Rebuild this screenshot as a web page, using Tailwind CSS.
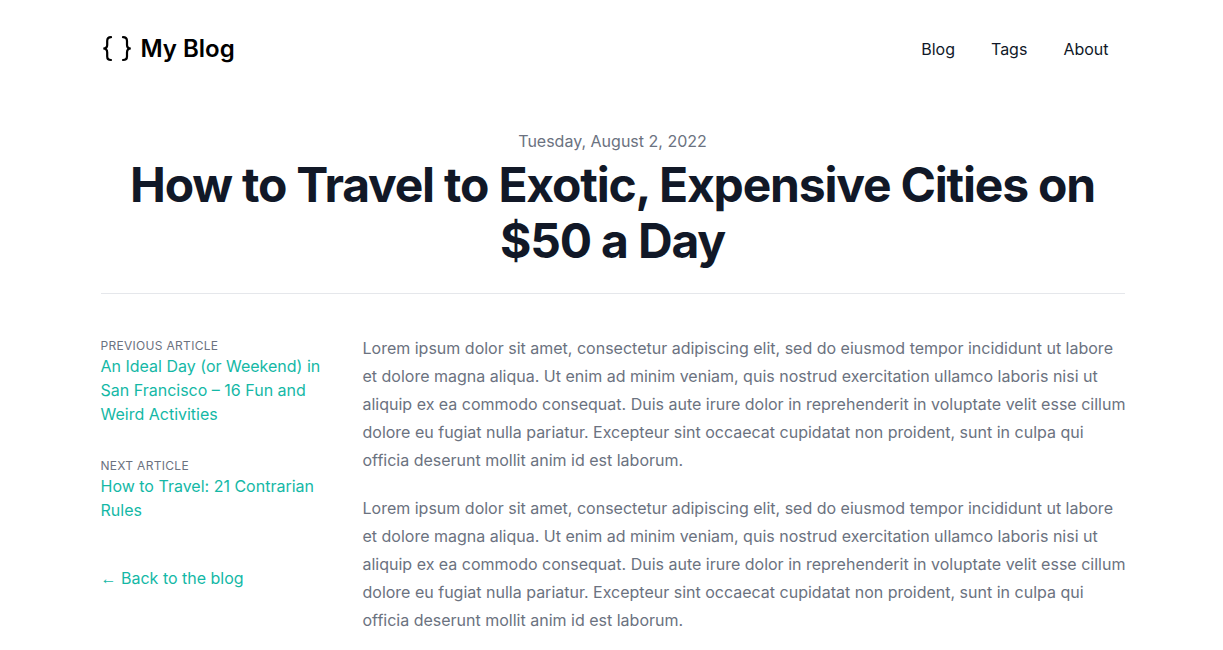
<!DOCTYPE html>
<html lang="en">
<head>
<meta charset="utf-8">
<meta name="viewport" content="width=device-width, initial-scale=1">
<title>My Blog</title>
<script src="https://cdn.jsdelivr.net/npm/@tailwindcss/browser@4"></script>
</head>
<body class="bg-white pl-0.5 font-['Inter','Liberation_Sans',sans-serif] text-black">
<div class="mx-auto max-w-5xl">
  <header class="flex items-center justify-between pt-[33px] pb-8">
    <a href="#" class="flex items-center gap-2">
      <svg class="h-8 w-8" viewBox="0 0 32 32" fill="none" stroke="currentColor" stroke-width="2.2" stroke-linecap="round" aria-hidden="true"><path d="M10 4.200Q6.200 4.200 6.200 8V12Q6.200 15.500 2.300 15.500Q6.200 15.500 6.200 19.500V23.500Q6.200 27 10 27M22 4.200Q26 4.200 26 8V12Q26 15.500 29.800 15.500Q26 15.500 26 19.500V23.500Q26 27 22 27"/></svg>
      <span class="text-2xl font-semibold">My Blog</span>
    </a>
    <nav class="flex gap-1 text-base text-gray-900">
      <a href="#" class="px-4">Blog</a>
      <a href="#" class="px-4">Tags</a>
      <a href="#" class="px-4">About</a>
    </nav>
  </header>
  <main>
    <article>
      <header class="border-b border-gray-200 pt-8 pb-6 text-center">
        <time datetime="2022-08-02" class="block text-base text-[#6b7280]">Tuesday, August 2, 2022</time>
        <h1 class="mt-1 text-5xl leading-14 font-bold tracking-tight text-[#111827]">How to Travel to Exotic, Expensive Cities on $50 a Day</h1>
      </header>
      <div class="grid grid-cols-4 gap-x-6">
        <aside class="pt-11">
          <h2 class="text-xs tracking-wide text-[#6b7280] uppercase">Previous Article</h2>
          <a href="#" class="block text-[#14b8a6]">An Ideal Day (or Weekend) in San Francisco – 16 Fun and Weird Activities</a>
          <h2 class="mt-8 text-xs tracking-wide text-[#6b7280] uppercase">Next Article</h2>
          <a href="#" class="block text-[#14b8a6]">How to Travel: 21 Contrarian Rules</a>
          <a href="#" class="mt-11 block text-[#14b8a6]"><span class="font-['Liberation_Sans',sans-serif]">←</span> Back to the blog</a>
        </aside>
        <div class="col-span-3 -mr-1 space-y-5 pt-10 leading-7 text-[#6b7280]">
          <p>Lorem ipsum dolor sit amet, consectetur adipiscing elit, sed do eiusmod tempor incididunt ut labore et dolore magna aliqua. Ut enim ad minim veniam, quis nostrud exercitation ullamco laboris nisi ut aliquip ex ea commodo consequat. Duis aute irure dolor in reprehenderit in voluptate velit esse cillum dolore eu fugiat nulla pariatur. Excepteur sint occaecat cupidatat non proident, sunt in culpa qui officia deserunt mollit anim id est laborum.</p>
          <p>Lorem ipsum dolor sit amet, consectetur adipiscing elit, sed do eiusmod tempor incididunt ut labore et dolore magna aliqua. Ut enim ad minim veniam, quis nostrud exercitation ullamco laboris nisi ut aliquip ex ea commodo consequat. Duis aute irure dolor in reprehenderit in voluptate velit esse cillum dolore eu fugiat nulla pariatur. Excepteur sint occaecat cupidatat non proident, sunt in culpa qui officia deserunt mollit anim id est laborum.</p>
        </div>
      </div>
    </article>
  </main>
</div>
</body>
</html>
